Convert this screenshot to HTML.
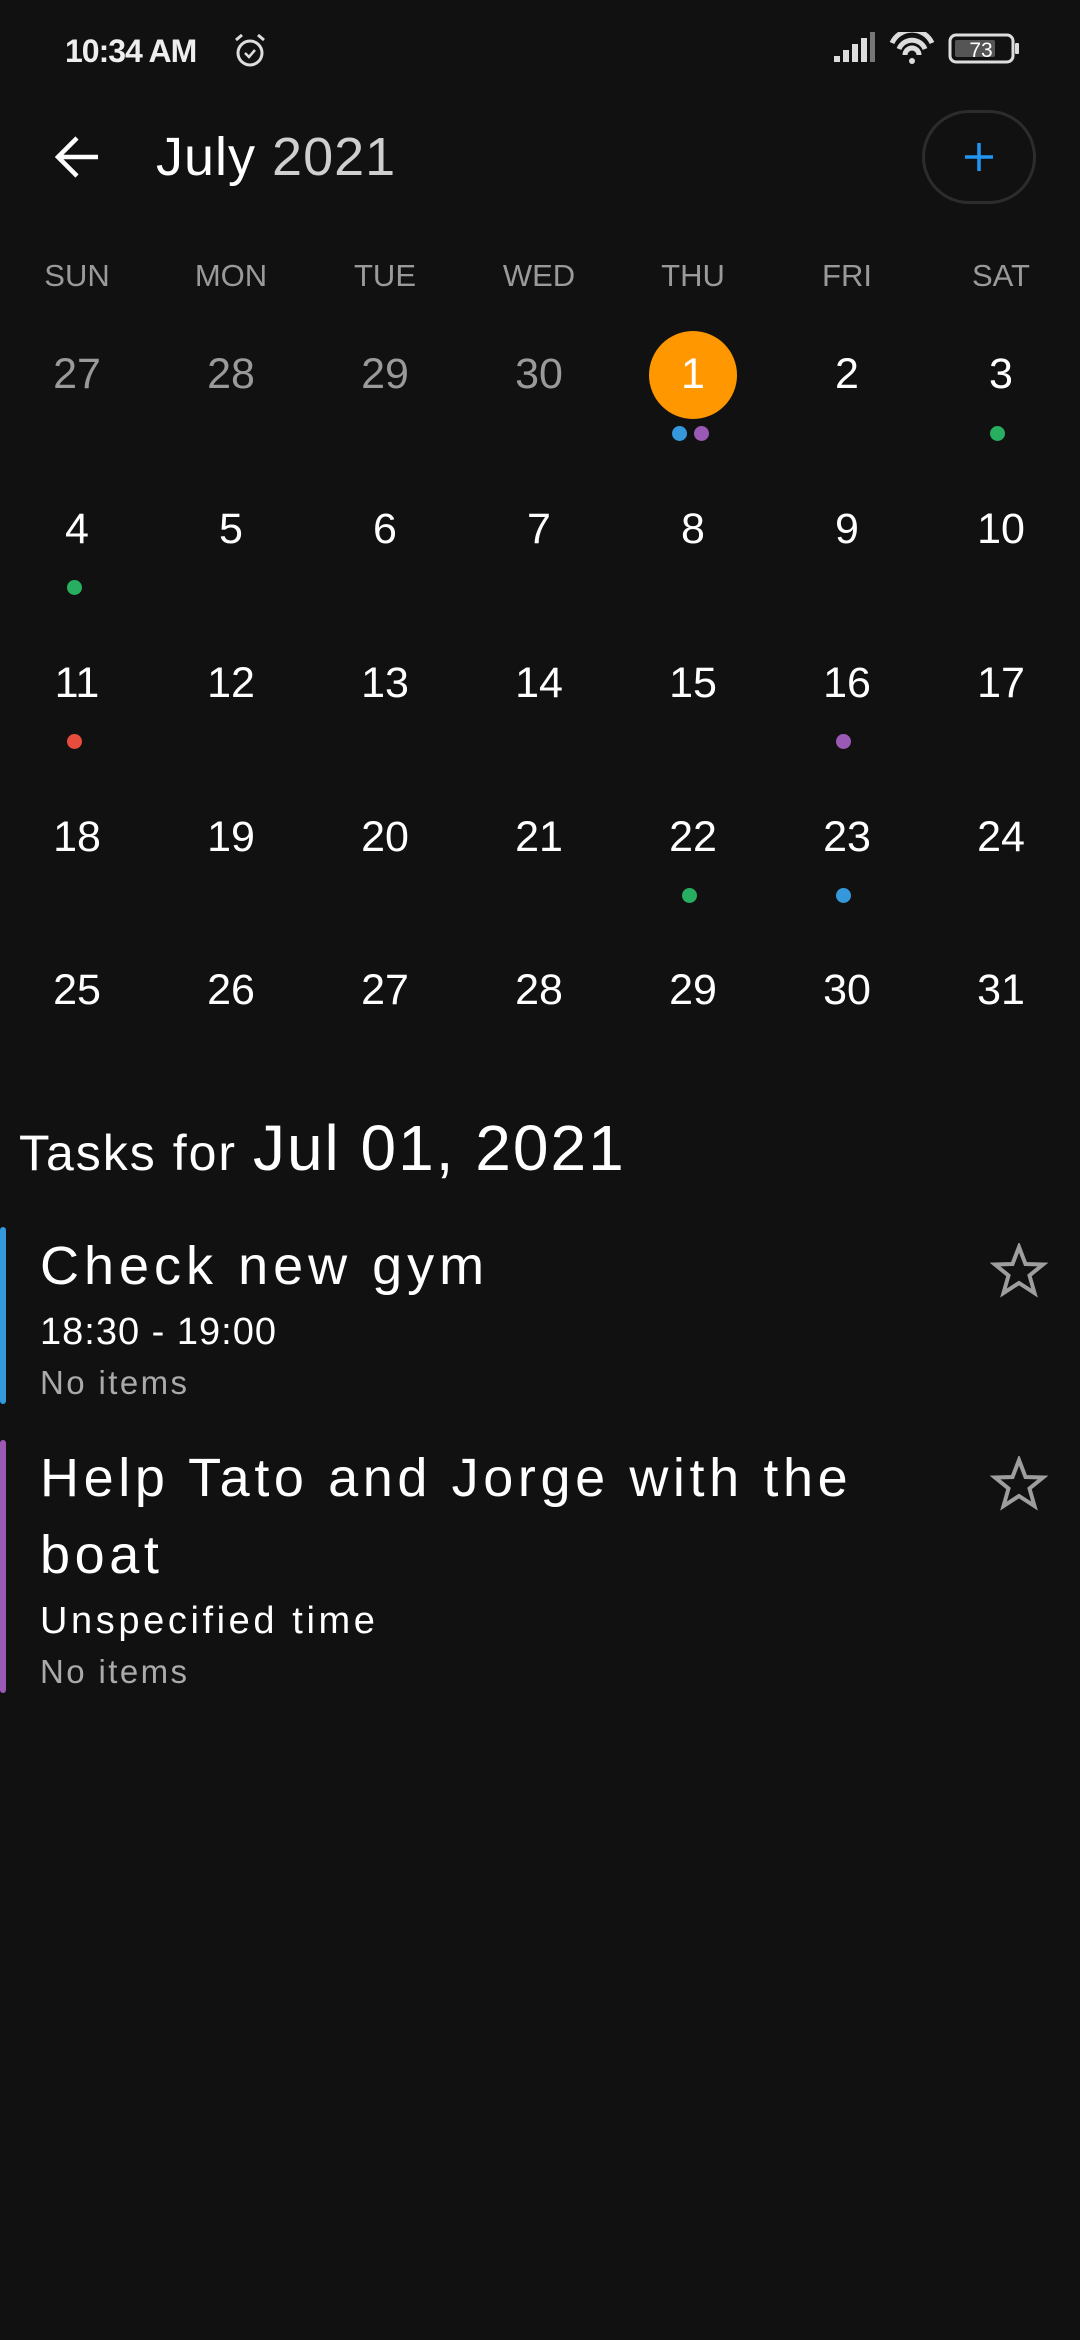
<!DOCTYPE html>
<html><head><meta charset="utf-8"><style>
*{margin:0;padding:0;box-sizing:border-box}
html,body{width:1080px;height:2340px;background:#111111;overflow:hidden}
body{position:relative;font-family:"Liberation Sans",sans-serif;color:#fff}
.a{position:absolute;white-space:nowrap}
.wd{position:absolute;top:260px;width:154px;text-align:center;font-size:31px;line-height:31px;color:#9a9a9a}
.d{position:absolute;width:154px;text-align:center;font-size:43px;line-height:43px;color:#fff}
.g{color:#9a9a9a}
.dot{position:absolute;width:15px;height:15px;border-radius:50%}
</style></head><body>
<!-- status bar -->
<div class="a" style="left:65px;top:35px;font-size:32px;line-height:32px;font-weight:bold;letter-spacing:-1px;color:#eee">10:34 AM</div>
<svg class="a" style="left:232px;top:32px" width="36" height="38" viewBox="0 0 36 38">
<circle cx="18" cy="21" r="12" fill="none" stroke="#ddd" stroke-width="3"/>
<path d="M13 21 l4 4 l6 -7" fill="none" stroke="#ddd" stroke-width="2.5"/>
<path d="M4 8 l6 -5 M32 8 l-6 -5" stroke="#ddd" stroke-width="3"/>
</svg>
<svg class="a" style="left:834px;top:32px" width="190" height="34" viewBox="0 0 190 34">
<rect x="0" y="24" width="6" height="6" fill="#ddd"/>
<rect x="9" y="18" width="6" height="12" fill="#ddd"/>
<rect x="18" y="12" width="6" height="18" fill="#ddd"/>
<rect x="27" y="6" width="6" height="24" fill="#ddd"/>
<rect x="36" y="0" width="5" height="30" fill="#777"/>
<path d="M58 11 a22 22 0 0 1 40 0" fill="none" stroke="#ddd" stroke-width="5"/>
<path d="M65 17 a14 14 0 0 1 26 0" fill="none" stroke="#ddd" stroke-width="5"/>
<path d="M71 23 a7 7 0 0 1 14 0" fill="none" stroke="#ddd" stroke-width="5"/>
<circle cx="78" cy="29" r="3" fill="#ddd"/>
<rect x="116" y="3" width="63" height="27" rx="6" fill="none" stroke="#ddd" stroke-width="3"/>
<rect x="121" y="8" width="40" height="17" rx="2" fill="#555"/>
<rect x="181" y="11" width="4" height="11" rx="1" fill="#ddd"/>
<text x="147" y="25" font-family="Liberation Sans" font-size="21" fill="#fff" text-anchor="middle">73</text>
</svg>
<!-- header -->
<svg class="a" style="left:54px;top:134px" width="48" height="46" viewBox="0 0 48 46">
<path d="M44 23 H5 M23 4 L4 23 L23 42" fill="none" stroke="#fff" stroke-width="4.5"/>
</svg>
<div class="a" style="left:156px;top:130px;font-size:54px;line-height:54px;letter-spacing:1px">July <span style="color:#cfcfcf">2021</span></div>
<div class="a" style="left:922px;top:110px;width:114px;height:94px;border-radius:47px;border:3px solid #2c2c2c"></div>
<svg class="a" style="left:964px;top:142px" width="30" height="30" viewBox="0 0 30 30">
<path d="M15 1 V29 M1 15 H29" stroke="#2196f3" stroke-width="3.5"/>
</svg>
<!-- weekdays -->
<div class="wd" style="left:0">SUN</div><div class="wd" style="left:154px">MON</div><div class="wd" style="left:308px">TUE</div><div class="wd" style="left:462px">WED</div><div class="wd" style="left:616px">THU</div><div class="wd" style="left:770px">FRI</div><div class="wd" style="left:924px">SAT</div>
<!-- orange circle -->
<div class="a" style="left:649px;top:331px;width:88px;height:88px;border-radius:50%;background:#ff9800"></div>
<!-- row 1 -->
<div class="d g" style="left:0;top:353px">27</div><div class="d g" style="left:154px;top:353px">28</div><div class="d g" style="left:308px;top:353px">29</div><div class="d g" style="left:462px;top:353px">30</div><div class="d" style="left:616px;top:353px">1</div><div class="d" style="left:770px;top:353px">2</div><div class="d" style="left:924px;top:353px">3</div>
<!-- row 2 -->
<div class="d" style="left:0;top:508px">4</div><div class="d" style="left:154px;top:508px">5</div><div class="d" style="left:308px;top:508px">6</div><div class="d" style="left:462px;top:508px">7</div><div class="d" style="left:616px;top:508px">8</div><div class="d" style="left:770px;top:508px">9</div><div class="d" style="left:924px;top:508px">10</div>
<!-- row 3 -->
<div class="d" style="left:0;top:662px">11</div><div class="d" style="left:154px;top:662px">12</div><div class="d" style="left:308px;top:662px">13</div><div class="d" style="left:462px;top:662px">14</div><div class="d" style="left:616px;top:662px">15</div><div class="d" style="left:770px;top:662px">16</div><div class="d" style="left:924px;top:662px">17</div>
<!-- row 4 -->
<div class="d" style="left:0;top:816px">18</div><div class="d" style="left:154px;top:816px">19</div><div class="d" style="left:308px;top:816px">20</div><div class="d" style="left:462px;top:816px">21</div><div class="d" style="left:616px;top:816px">22</div><div class="d" style="left:770px;top:816px">23</div><div class="d" style="left:924px;top:816px">24</div>
<!-- row 5 -->
<div class="d" style="left:0;top:969px">25</div><div class="d" style="left:154px;top:969px">26</div><div class="d" style="left:308px;top:969px">27</div><div class="d" style="left:462px;top:969px">28</div><div class="d" style="left:616px;top:969px">29</div><div class="d" style="left:770px;top:969px">30</div><div class="d" style="left:924px;top:969px">31</div>
<!-- dots -->
<div class="dot" style="left:672px;top:426px;background:#3498db"></div>
<div class="dot" style="left:694px;top:426px;background:#9b59b6"></div>
<div class="dot" style="left:990px;top:426px;background:#27ae60"></div>
<div class="dot" style="left:67px;top:580px;background:#27ae60"></div>
<div class="dot" style="left:67px;top:734px;background:#e74c3c"></div>
<div class="dot" style="left:836px;top:734px;background:#9b59b6"></div>
<div class="dot" style="left:682px;top:888px;background:#27ae60"></div>
<div class="dot" style="left:836px;top:888px;background:#3498db"></div>
<!-- tasks -->
<div class="a" style="left:19px;top:1116px;line-height:64px;letter-spacing:2px"><span style="font-size:50px">Tasks for </span><span style="font-size:64px">Jul 01, 2021</span></div>
<div class="a" style="left:0;top:1227px;width:6px;height:177px;border-radius:3px;background:#3498db"></div>
<div class="a" style="left:40px;top:1239px;font-size:54px;line-height:54px;letter-spacing:5px">Check new gym</div>
<div class="a" style="left:40px;top:1313px;font-size:38px;line-height:38px;letter-spacing:1px">18:30 - 19:00</div>
<div class="a" style="left:40px;top:1366px;font-size:33px;line-height:33px;color:#aaa;letter-spacing:2.4px">No items</div>
<div class="a" style="left:0;top:1440px;width:6px;height:253px;border-radius:3px;background:#9b59b6"></div>
<div class="a" style="left:40px;top:1440px;font-size:54px;line-height:77px;letter-spacing:4.6px">Help Tato and Jorge with the<br>boat</div>
<div class="a" style="left:40px;top:1602px;font-size:38px;line-height:38px;letter-spacing:3.6px">Unspecified time</div>
<div class="a" style="left:40px;top:1655px;font-size:33px;line-height:33px;color:#aaa;letter-spacing:2.4px">No items</div>
<svg class="a" style="left:990px;top:1243px" width="58" height="56" viewBox="0 0 58 56">
<path d="M29 4 L35.5 21 L53 21.5 L39.5 32.5 L44.5 50 L29 40 L13.5 50 L18.5 32.5 L5 21.5 L22.5 21 Z" fill="none" stroke="#9e9e9e" stroke-width="4" stroke-linejoin="miter"/>
</svg>
<svg class="a" style="left:990px;top:1456px" width="58" height="56" viewBox="0 0 58 56">
<path d="M29 4 L35.5 21 L53 21.5 L39.5 32.5 L44.5 50 L29 40 L13.5 50 L18.5 32.5 L5 21.5 L22.5 21 Z" fill="none" stroke="#9e9e9e" stroke-width="4" stroke-linejoin="miter"/>
</svg>
</body></html>
